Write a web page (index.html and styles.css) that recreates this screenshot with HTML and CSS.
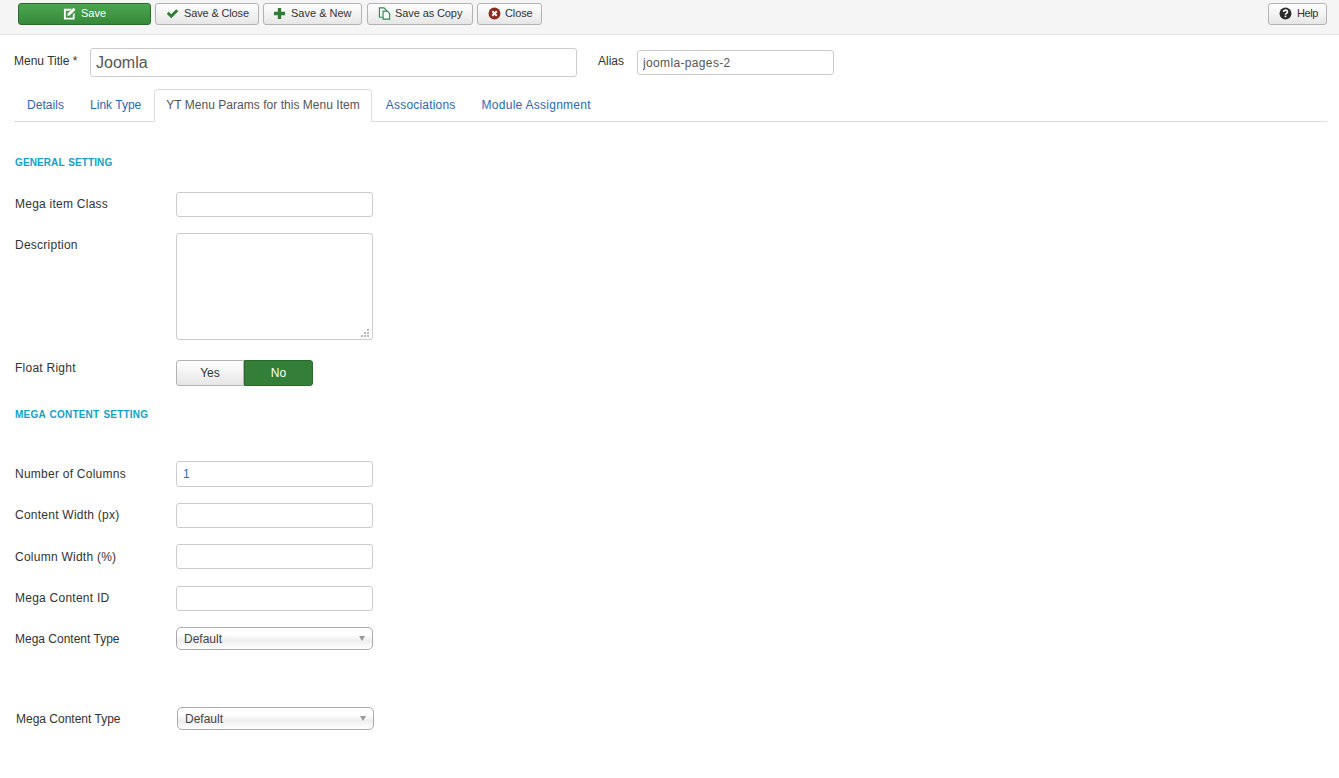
FILE: index.html
```html
<!DOCTYPE html>
<html lang="en">
<head>
<meta charset="utf-8">
<title>Menu item</title>
<link rel="stylesheet" href="styles.css">
</head>
<body>
<div class="toolbar">
  <button class="btn btn-save" type="button">
    <svg class="ico" viewBox="0 0 14 14"><path fill="#fff" d="M1 2h8.500L7.600 4H3v7.500h7.500V8.200l2-2V13.500H1z"/><path fill="#fff" d="M11.300.800l2.200 2.200L7.500 9 4.700 9.800l.600-3z"/></svg>
    <span>Save</span>
  </button>
  <button class="btn btn-close-save" type="button">
    <svg class="ico" viewBox="0 0 14 14"><path fill="#2f7d32" d="M0.800 7.400l2.200-2.200 2.600 2.600L11 2.400l2.200 2.200L5.600 12.200z"/></svg>
    <span>Save &amp; Close</span>
  </button>
  <button class="btn btn-new" type="button">
    <svg class="ico" viewBox="0 0 14 14"><path fill="#2f7d32" d="M5.200 1h3.600v4.200H13v3.600H8.800V13H5.200V8.800H1V5.200h4.200z"/></svg>
    <span>Save &amp; New</span>
  </button>
  <button class="btn btn-copy" type="button">
    <svg class="ico" viewBox="0 0 14 14"><path fill="none" stroke="#2f8a4e" stroke-width="1.200" d="M1.500 1h5l2.500 2.500v7.500h-7.500z"/><path fill="#fff" stroke="#2f8a4e" stroke-width="1.200" d="M5.500 4.500h4.500l2.500 2.500v6h-7z"/></svg>
    <span>Save as Copy</span>
  </button>
  <button class="btn btn-close" type="button">
    <svg class="ico" viewBox="0 0 14 14"><circle cx="7" cy="7" r="6.400" fill="#8f2a20"/><path stroke="#fff" stroke-width="2" d="M4.600 4.600l4.800 4.800M9.400 4.600l-4.800 4.800"/></svg>
    <span>Close</span>
  </button>
  <button class="btn btn-help" type="button">
    <svg class="ico" viewBox="0 0 14 14"><circle cx="7" cy="7" r="6.400" fill="#2b2b2b"/><path fill="none" stroke="#fff" stroke-width="1.800" d="M4.900 5.400c0-1.300 1-2 2.100-2s2.100.7 2.100 1.900c0 1.500-2.100 1.500-2.100 3"/><rect x="6.100" y="9.300" width="1.800" height="1.700" fill="#fff"/></svg>
    <span>Help</span>
  </button>
</div>

<div class="content">
  <div class="title-row">
    <label class="title-label">Menu Title *</label>
    <input class="input-title" type="text" value="Joomla">
    <label class="alias-label">Alias</label>
    <input class="input-alias" type="text" value="joomla-pages-2">
  </div>

  <ul class="tabs">
    <li class="tab-details"><a href="#">Details</a></li>
    <li><a href="#">Link Type</a></li>
    <li class="active"><a href="#">YT Menu Params for this Menu Item</a></li>
    <li class="tab-assoc"><a href="#">Associations</a></li>
    <li class="tab-module"><a href="#">Module Assignment</a></li>
  </ul>

  <div class="form">
    <h3 class="heading heading-first">GENERAL SETTING</h3>

    <div class="row row-a">
      <label>Mega item Class</label>
      <input type="text">
    </div>
    <div class="row row-b">
      <label>Description</label>
      <div class="area">
        <textarea></textarea>
        <svg class="grip" width="9" height="8" viewBox="0 0 9 8"><path fill="#bbb" d="M6 0h2v2H6zM3 3h2v2H3zM6 3h2v2H6zM0 6h2v2H0zM3 6h2v2H3zM6 6h2v2H6z"/></svg>
      </div>
    </div>
    <div class="row row-c">
      <label>Float Right</label>
      <div class="toggle">
        <span class="toggle-yes">Yes</span>
        <span class="toggle-no">No</span>
      </div>
    </div>

    <h3 class="heading heading-second">MEGA CONTENT SETTING</h3>

    <div class="row row-d low">
      <label>Number of Columns</label>
      <input class="tall" type="text" value="1">
    </div>
    <div class="row row-e">
      <label>Content Width (px)</label>
      <input type="text">
    </div>
    <div class="row row-f low">
      <label>Column Width (%)</label>
      <input type="text">
    </div>
    <div class="row row-e">
      <label>Mega Content ID</label>
      <input type="text">
    </div>
    <div class="row tight">
      <label>Mega Content Type</label>
      <div class="select"><span>Default</span><i class="caret"></i></div>
    </div>
    <div class="row row-last tight">
      <label>Mega Content Type</label>
      <div class="select"><span>Default</span><i class="caret"></i></div>
    </div>
  </div>
</div>
</body>
</html>
```

FILE: styles.css
```css
* { box-sizing: border-box; }
html, body { margin: 0; padding: 0; }
body {
  background: #fff;
  color: #333;
  font-family: "Liberation Sans", Arial, sans-serif;
  font-size: 12px;
  line-height: 18px;
}
.toolbar {
  display: flex;
  align-items: flex-start;
  gap: 4px;
  height: 35px;
  padding: 3px 12px 0 18px;
  background: #f5f5f5;
  border-bottom: 1px solid #e3e3e3;
}
.btn {
  display: flex;
  align-items: center;
  gap: 5px;
  height: 22px;
  padding: 0 0 2px 10px;
  font: 11px/18px "Liberation Sans", Arial, sans-serif;
  color: #333;
  white-space: nowrap;
  background: linear-gradient(#fff, #e6e6e6);
  border: 1px solid #b3b3b3;
  border-radius: 3px;
}
.btn-save {
  width: 133px;
  padding-left: 44px;
  color: #fff;
  background: linear-gradient(#4ba64f, #36893a);
  border-color: #2a6b2d;
}
.btn-close-save { width: 104px; letter-spacing: -.15px; }
.btn-new { width: 99px; margin-right: 1px; padding-left: 9px; }
.btn-copy { width: 106px; gap: 4px; letter-spacing: -.1px; }
.btn-close { width: 65px; gap: 4px; letter-spacing: -.1px; }
.btn-help { width: 59px; margin-left: auto; letter-spacing: -.4px; }
.ico { width: 13px; height: 13px; flex: none; }

.content { padding: 0 12px 0 14px; }
.title-row {
  display: flex;
  align-items: center;
  height: 29px;
  margin-top: 13px;
}
.title-label { width: 76px; margin-top: -4px; }
.input-title {
  width: 487px;
  height: 29px;
  padding: 0 5px;
  font-size: 16px;
}
.alias-label { margin-left: 21px; width: 39px; margin-top: -4px; }
.input-alias { width: 197px; height: 25px; padding: 0 5px; letter-spacing: .35px; }

input, textarea {
  display: block;
  padding: 0 6px;
  font-family: "Liberation Sans", Arial, sans-serif;
  font-size: 12px;
  color: #555;
  background: #fff;
  border: 1px solid #ccc;
  border-radius: 3px;
  outline: none;
}
.tabs {
  display: flex;
  list-style: none;
  margin: 12px 0 0;
  padding: 0;
  height: 33px;
  border-bottom: 1px solid #ddd;
}
.tabs a {
  display: block;
  height: 33px;
  padding: 6px 12px 0;
  color: #2a69b8;
  text-decoration: none;
  border: 1px solid transparent;
  border-bottom: 0;
}
.tabs .tab-details a { letter-spacing: .06px; }
.tabs .active a {
  padding: 6px 11px 0;
  margin-right: 1px;
  letter-spacing: .03px;
  color: #555;
  background: #fff;
  border-color: #ddd;
  border-radius: 4px 4px 0 0;
}
.tabs .tab-assoc a { letter-spacing: .2px; }
.tabs .tab-module a { letter-spacing: .27px; }
.form { padding-left: 1px; }
.heading {
  margin: 0;
  font-size: 10px;
  line-height: 14px;
  font-weight: bold;
  word-spacing: 1px;
  color: #15a0c8;
}
.heading-first { margin-top: 34px; margin-bottom: 22px; letter-spacing: .1px; }
.heading-second { margin-top: 22px; margin-bottom: 39px; letter-spacing: .22px; }
.row {
  display: flex;
  align-items: flex-start;
}
.row label { width: 161px; flex: none; padding-top: 3px; letter-spacing: .25px; }
.row.low label { padding-top: 4px; }
.row.tight label { letter-spacing: 0; }
.row input { width: 197px; height: 25px; }
.row input.tall { height: 26px; color: #2a69b8; }
.row-a { margin-bottom: 16px; }
.row-b { margin-bottom: 20px; }
.area { position: relative; width: 197px; height: 107px; }
.area textarea { width: 197px; height: 107px; resize: none; }
.grip { position: absolute; right: 3px; bottom: 3px; }
.row-c { height: 26px; }
.row-c label { margin-top: -1px; padding-top: 0; }
.row-d { margin-bottom: 16px; }
.row-e { margin-bottom: 16px; }
.row-f { margin-bottom: 17px; }
.row-last { margin-top: 57px; margin-left: 1px; }

.toggle { display: flex; height: 26px; }
.toggle span {
  display: flex;
  align-items: center;
  justify-content: center;
  height: 26px;
}
.toggle-yes {
  width: 68px;
  color: #333;
  background: linear-gradient(#fff, #e6e6e6);
  border: 1px solid #b3b3b3;
  border-radius: 3px 0 0 3px;
}
.toggle-no {
  width: 69px;
  color: #fff;
  background: #347f38;
  border: 1px solid #2a6b2d;
  border-radius: 0 3px 3px 0;
}
.select {
  position: relative;
  width: 197px;
  height: 23px;
  padding: 2px 7px;
  color: #444;
  background: linear-gradient(#fff 0%, #fff 30%, #eee 60%, #fff 100%);
  border: 1px solid #aaa;
  border-radius: 5px;
}
.caret {
  position: absolute;
  top: 8px;
  right: 7px;
  width: 0;
  height: 0;
  border-left: 3.5px solid transparent;
  border-right: 3.5px solid transparent;
  border-top: 5px solid #999;
}
```
